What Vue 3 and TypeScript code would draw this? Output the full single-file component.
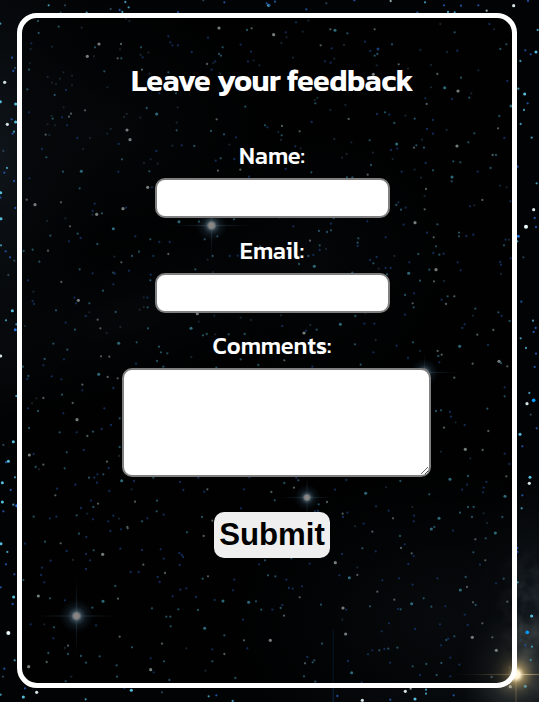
<script setup lang="ts">
interface Star { x: number; y: number; kind: string }
interface Tile { x: number; y: number; stars: Star[] }
interface Flare { x: number; y: number; core: number; glow: number; rayX: number; rayY: number }

// Star positions per sky tile, in thirds of a pixel: "x,y,kind".
// w = pale, c = cyan, b = blue, d = faint; capitals are the larger stars.
function tile(x: number, y: number, data: string): Tile {
  const stars = data.trim().split(/\s+/).map((entry) => {
    const [sx, sy, kind] = entry.split(',')
    return { x: Number(sx), y: Number(sy), kind }
  })
  return { x, y, stars }
}

const tiles: Tile[] = [
  tile(0, 0, `146,16,c 195,16,d 376,6,c 386,22,c 332,27,d 367,36,c 260,38,c 182,38,d 359,30,b 534,37,b 610,1,d 673,7,b 800,10,b 806,16,C
    1,71,c 114,63,c 176,80,c 116,99,c 245,83,d 378,56,d 388,63,d 657,84,W 741,90,c 755,85,w 624,113,b 505,109,b 511,127,b 517,136,b 534,136,b
    722,134,b 297,132,W 262,169,W 285,142,c 282,169,d 363,132,w 360,148,d 353,175,w 364,175,c 423,142,c 422,165,d 445,158,d 428,172,b 156,140,d
    94,130,b 92,147,d 36,173,b 87,209,c 90,190,d 40,213,b 45,204,d 190,217,d 216,227,d 313,214,c 575,156,b 668,142,c 657,162,c 663,167,c 646,184,b
    621,192,w 640,189,d 753,155,b 744,184,b 761,181,d 778,196,d 426,209,w 505,217,c 635,209,b 660,221,d 448,221,d 14,247,W 82,268,c 143,231,d
    156,248,d 180,236,d 168,253,d 216,256,d 198,270,b 164,285,c 322,262,d 1,305,C 47,312,C 478,280,b 528,280,c 736,320,c 533,322,d 440,324,c
    255,331,w 191,322,d 87,337,b 213,341,w 207,350,w 155,348,d 158,356,c 186,352,b 35,358,b 47,366,C 22,373,W 380,342,d 470,342,C 372,351,d
    421,353,d 650,358,w 530,368,d 530,391,c 633,393,c 795,376,c 802,382,b 143,373,d 165,376,d 201,376,b 42,395,c 38,401,b 137,404,w 148,405,d
    232,414,b 270,414,d 322,401,d 332,387,d 381,390,W 390,419,W 356,432,b 672,403,c 708,412,b 126,447,b 139,472,c 249,447,d 10,453,d 545,436,b
    583,438,c 517,437,d 688,434,d 469,453,b 366,478,c 452,478,d 473,491,d 662,475,c 647,482,b 21,504,c 13,518,b 189,515,c 244,514,C 355,515,b
    448,514,c 654,512,w 721,509,w 432,489,d 703,477,b`),
  tile(269, 0, `1,15,b 18,5,b 112,28,b 256,1,b 365,3,w 468,7,c 525,16,b 576,17,b 628,16,b 734,17,W 777,3,b 172,10,d 653,32,w 557,37,c 537,36,c
    445,38,b 806,90,c 118,62,d 81,67,b 14,104,W 50,97,b 53,112,d 37,129,d 184,88,w 198,91,C 235,100,c 317,88,w 101,95,d 155,136,w 188,145,b
    225,135,d 288,125,b 327,147,B 304,153,b 317,167,c 325,162,c 369,133,c 454,150,d 534,156,d 565,152,b 557,97,c 514,72,d 661,72,b 675,88,d
    712,133,c 694,147,c 769,151,b 801,156,C 785,163,b 754,183,c 72,173,d 168,184,b 185,188,b 196,176,d 389,193,w 417,206,d 486,195,d 323,196,d
    313,223,W 505,222,w 576,233,c 628,211,d 715,243,b 527,263,C 567,273,W 549,297,b 469,295,b 473,312,w 601,293,c 607,280,d 486,262,d
    748,266,c 767,282,C 776,310,b 765,330,c 755,372,c 788,413,c 726,318,C 687,385,w 691,348,c 139,310,c 145,294,d 137,300,d 184,330,d 229,315,d
    239,357,w 324,342,b 348,337,c 361,344,b 376,369,c 409,347,d 437,356,c 492,360,b 533,390,d 474,387,b 39,378,w 28,396,d 38,406,c 92,394,w
    128,366,b 196,417,d 247,427,d 302,421,c 383,432,C 366,450,b 385,446,b 435,443,w 442,436,c 465,443,c 459,419,d 492,401,b 598,427,c 616,400,c
    564,438,W 553,484,c 574,487,c 671,465,w 681,465,c 706,414,b 746,500,b 665,504,c 79,439,b 219,473,d 233,462,d 312,458,d 371,477,d
    306,495,c 296,524,w 127,517,c 50,507,b 470,489,b 492,511,c 626,515,b 398,515,b 437,509,d 36,420,d 95,445,d`),
  tile(0, 176, `2,50,C 42,15,b 88,7,b 1,65,b 46,96,b 3,128,C 80,71,w 105,86,W 183,79,w 239,37,c 443,34,W 456,34,b 284,83,b 278,105,b 277,116,d
    290,115,W 306,112,c 369,98,W 378,95,b 141,135,d 196,127,d 210,151,w 233,173,c 340,158,C 151,179,c 207,196,b 242,186,b 292,204,c 3,208,c
    17,226,b 30,244,b 43,254,d 71,225,c 98,221,c 144,224,w 118,257,c 239,280,c 278,292,b 340,290,c 345,293,b 364,259,w 387,284,b 406,181,b
    451,190,c 478,198,b 509,198,b 396,240,c 417,227,c 460,240,b 505,234,w 343,242,d 537,137,C 597,137,c 702,130,c 652,181,c 614,190,c 638,240,c
    623,251,d 689,240,b 713,239,b 586,280,c 639,289,d 452,296,b 451,313,c 84,313,b 184,318,w 309,344,c 340,325,b 25,297,d 100,347,d 98,375,b
    102,384,b 37,404,C 18,433,c 49,445,c 46,461,B 168,403,c 223,365,b 235,373,W 228,382,b 268,382,c 268,409,d 257,420,b 293,431,w 347,408,c
    197,440,b 225,461,c 301,457,w 320,471,d 361,453,d 75,450,d 356,502,C 160,503,c 202,521,c 410,499,c 444,457,c 477,512,c 431,364,d 442,365,b
    431,393,d 443,394,c 419,401,d 592,413,W 643,419,d 596,437,d 573,457,C 609,478,c 620,474,c 646,475,d 686,475,c 734,474,c 722,425,d 747,2,b
    781,211,c 753,432,d`),
  tile(269, 176, `234,4,c 250,4,c 456,5,d 549,3,C 548,16,c 471,39,w 467,60,d 467,100,w 388,79,b 382,87,c 396,101,c 410,95,b 640,72,w 603,91,b
    616,88,d 693,29,d 713,34,d 724,76,b 803,22,c 794,101,W 797,126,b 801,153,b 771,152,H 748,181,B 745,196,c 710,191,b 705,208,c 763,244,d
    438,140,W 404,146,b 505,145,c 494,184,w 474,170,b 501,211,c 570,170,c 570,181,c 613,176,b 592,180,b 720,191,d 725,247,b 693,258,b 696,266,b
    448,234,c 493,231,b 511,236,c 524,233,b 421,259,b 501,281,W 481,281,c 419,292,C 453,314,c 495,316,w 566,259,b 575,283,b 696,294,d
    73,151,b 32,125,d 194,126,c 186,143,b 186,163,c 174,168,c 150,165,c 123,194,w 152,208,c 152,222,b 171,219,d 136,271,C 118,240,c 133,237,b
    90,264,c 268,187,c 266,200,c 266,210,b 295,136,b 350,184,b 323,243,b 303,252,b 313,262,c 329,278,d 350,276,b 365,276,b 376,240,d
    354,295,c 250,290,c 408,357,c 435,352,b 431,382,w 434,394,c 408,416,b 536,361,c 556,361,w 518,371,b 531,384,w 525,315,d 619,398,c 612,419,d
    688,409,c 698,420,b 722,435,c 673,462,w 625,476,w 587,445,b 580,456,b 757,377,b 792,434,c 800,456,b 794,468,b 755,487,c 771,516,c
    259,420,c 214,445,C 105,471,W 111,464,b 143,461,c 36,418,d 40,450,b 124,447,d 286,443,b 316,443,b 289,412,d 258,505,c 383,509,b 432,499,c
    572,511,C 506,525,w 657,507,b 453,525,d 320,492,d`),
  tile(0, 352, `2,12,W 134,21,c 130,40,b 192,22,b 69,44,c 85,72,c 82,81,b 155,73,b 184,82,b 296,67,C 323,75,w 353,79,w 340,108,b 247,98,w
    247,115,b 303,13,w 328,14,w 186,128,c 130,138,w 109,139,d 96,154,d 84,169,b 114,177,c 218,153,w 190,184,b 313,169,b 231,203,W 359,199,c
    333,219,b 305,231,b 279,239,c 262,252,w 230,241,b 179,241,c 87,228,c 49,132,c 40,269,C 10,279,d 25,328,C 18,331,b 45,376,c 7,392,C 32,414,b
    7,450,C 40,458,c 50,461,B 10,478,b 88,309,W 101,306,b 130,338,w 107,345,c 117,352,d 200,301,c 251,294,b 359,285,c 357,312,d 321,329,w
    326,348,b 194,349,c 267,377,c 283,377,b 292,367,b 310,367,c 291,392,b 226,398,b 365,386,C 402,387,b 460,377,c 328,417,b 171,410,b
    166,430,w 273,446,b 280,465,c 294,455,w 405,449,w 243,468,b 262,485,d 230,490,c 279,502,b 340,491,b 325,508,b 426,508,c 470,478,c
    471,446,c 382,525,w 357,500,d 101,494,c 150,499,b 169,494,b 540,390,b 550,414,b 595,377,b 622,412,w 613,419,b 732,412,b 723,469,b
    606,495,c 637,506,w 442,499,b 491,488,b 395,412,d 722,22,c 775,39,c 649,47,c 490,44,c 502,4,c 483,1,c 471,27,c 574,15,d 408,35,b 748,376,b`),
  tile(269, 352, `46,25,w 130,44,b 417,18,b 508,12,c 518,8,w 511,31,b 611,35,w 690,28,W 696,33,c 715,43,w 801,5,b 797,45,b 275,38,c
    313,1,b 556,77,w 501,177,c 543,180,b 516,175,c 546,194,b 587,219,b 560,211,d 525,227,w 655,170,c 658,237,w 707,106,b 707,133,c
    781,123,c 794,145,N 774,155,W 785,188,d 753,247,C 760,283,b 803,229,b 589,292,W 604,319,d 641,294,w 707,305,b 721,336,b 516,299,d
    543,382,C 597,372,c 594,398,b 579,413,b 652,390,b 712,373,w 783,376,C 781,394,W 642,421,b 760,430,b 758,469,c 708,433,C 644,407,b
    394,387,c 481,427,c 430,465,d 435,491,b 434,508,b 510,499,C 573,482,c 597,465,c 614,465,c 609,495,c 644,484,d 700,495,c 654,513,d
    7,420,w 46,393,c 17,445,c 88,385,c 75,407,w 82,377,b 174,450,w 149,457,c 138,478,b 147,477,b 198,413,b 232,384,b 290,424,C 351,406,d
    321,463,b 359,476,b 372,499,w 235,482,b 221,485,w 222,495,b 284,515,b 496,525,c 258,523,d`),
  tile(0, 528, `3,47,C 22,72,c 18,109,b 43,139,b 2,178,b 41,207,C 38,228,b 25,315,H 44,397,c 13,422,b 2,500,c 9,446,d 75,47,b 135,41,c 182,46,w
    200,69,b 281,67,c 308,79,W 270,97,b 219,96,d 237,17,c 259,27,b 258,78,b 152,98,b 126,119,b 123,141,b 133,163,b 70,156,c 258,123,b
    115,204,W 150,211,c 195,217,b 309,220,C 354,212,w 346,174,c 277,239,c 288,292,b 162,298,c 92,289,b 133,289,d 160,331,b 204,353,w
    195,360,d 204,378,c 243,384,c 145,375,c 140,402,w 86,416,W 258,404,c 299,385,c 350,412,c 351,446,c 214,446,d 197,460,c 359,326,w
    396,358,c 452,391,b 492,400,c 452,425,W 461,433,b 508,456,c 486,347,w 456,241,c 512,295,c 499,266,c 511,266,c 535,244,c 518,205,b
    541,185,b 559,181,b 495,135,w 473,147,b 479,162,b 416,132,b 392,132,b 430,110,w 361,62,b 363,4,b 331,9,b 383,1,w 426,66,b 482,64,b
    491,92,b 545,81,b 538,75,b 549,87,b 539,111,b 561,13,c 611,24,w 608,152,c 624,145,w 703,155,b 699,187,b 644,216,b 588,207,b 594,246,c
    669,219,C 614,301,C 673,322,c 729,275,b 746,223,C 768,220,c 784,245,c 732,337,w 742,361,b 637,364,b 637,400,c 673,378,w 616,428,d
    559,361,d 706,450,c 626,505,c 649,502,b 698,519,c 110,493,W 75,481,b 70,507,C 257,514,c 394,487,C 373,479,b 486,493,d 777,109,b 795,97,c 804,142,c`),
  tile(269, 528, `310,11,w 280,61,c 320,70,b 219,78,b 199,104,W 122,107,b 67,91,c 19,145,c 52,155,b 211,142,b 241,149,C 265,141,w 265,118,d
    340,157,b 390,151,b 418,108,b 396,60,w 393,24,c 407,49,b 428,76,w 434,84,b 487,3,C 552,8,b 619,34,w 650,31,c 679,15,C 613,73,c
    649,97,w 633,110,b 745,60,b 745,72,b 746,163,c 704,152,c 681,166,b 590,147,c 594,177,w 574,186,C 505,151,b 431,170,b 612,223,w
    620,231,c 715,221,w 788,264,C 775,313,N 789,356,c 785,396,c 756,335,d 769,352,b 670,328,w 610,328,W 640,286,w 596,291,b 587,260,b
    529,235,b 487,236,c 464,211,c 428,227,C 376,215,w 325,191,w 303,235,c 387,243,b 395,244,c 222,240,W 232,245,b 156,230,c 92,208,w
    71,182,b 60,180,b 99,175,b 40,231,b 35,240,c 45,263,w 10,245,b 4,337,W 159,347,c 220,275,d 230,318,W 360,286,b 338,310,b 438,303,b
    513,289,b 532,336,c 538,332,b 556,325,c 516,352,b 385,359,c 358,362,c 346,363,b 331,367,c 310,367,b 297,379,b 363,404,b 237,399,b
    136,397,c 131,403,c 108,406,w 115,387,b 105,445,c 139,461,c 248,434,C 278,463,b 431,415,c 472,408,c 517,405,c 544,389,b 571,410,b
    503,441,c 453,441,b 544,445,b 682,367,W 668,447,w 722,419,w 724,476,W 769,475,C 471,485,c 471,497,c 438,513,C 409,490,W 425,482,w
    280,517,W 364,515,b 205,504,b 554,502,b`),
]

const flares: Flare[] = [
  { x: 211.5, y: 225.5, core: 4.2, glow: 16, rayX: 45, rayY: 40 },
  { x: 307, y: 497.5, core: 3.3, glow: 13, rayX: 28, rayY: 24 },
  { x: 76.5, y: 616, core: 4.2, glow: 17, rayX: 44, rayY: 42 },
  { x: 424.5, y: 372.5, core: 4, glow: 14, rayX: 36, rayY: 20 },
]
</script>

<template>
  <main class="page">
    <svg class="sky" viewBox="0 0 539 702" aria-hidden="true">
      <defs>
        <radialGradient id="haze">
          <stop offset="0" stop-color="#18212a" stop-opacity=".55" />
          <stop offset="1" stop-color="#10161c" stop-opacity="0" />
        </radialGradient>
        <radialGradient id="halo">
          <stop offset="0" stop-color="#c5deeb" />
          <stop offset=".25" stop-color="#81a9c4" stop-opacity=".8" />
          <stop offset=".55" stop-color="#426983" stop-opacity=".35" />
          <stop offset="1" stop-color="#24465d" stop-opacity="0" />
        </radialGradient>
        <radialGradient id="ray">
          <stop offset="0" stop-color="#c0ddec" />
          <stop offset=".35" stop-color="#608aa3" stop-opacity=".5" />
          <stop offset="1" stop-color="#38627d" stop-opacity="0" />
        </radialGradient>
        <radialGradient id="core">
          <stop offset="0" stop-color="#fff6ee" />
          <stop offset=".5" stop-color="#f5f1ed" />
          <stop offset="1" stop-color="#bbd4df" stop-opacity="0" />
        </radialGradient>
        <radialGradient id="sun">
          <stop offset="0" stop-color="#fffdf0" />
          <stop offset=".15" stop-color="#fff1cd" />
          <stop offset=".32" stop-color="#b39b65" stop-opacity=".7" />
          <stop offset=".65" stop-color="#595443" stop-opacity=".35" />
          <stop offset="1" stop-color="#343c3d" stop-opacity="0" />
        </radialGradient>
        <radialGradient id="mist">
          <stop offset="0" stop-color="#6d6b5b" stop-opacity=".6" />
          <stop offset=".5" stop-color="#3a4040" stop-opacity=".4" />
          <stop offset="1" stop-color="#20282c" stop-opacity="0" />
        </radialGradient>
        <filter id="cloud" x="0" y="0" width="100%" height="100%">
          <feTurbulence type="fractalNoise" baseFrequency=".045" numOctaves="4" seed="8" />
          <feColorMatrix values="0 0 0 0 .3  0 0 0 0 .32  0 0 0 0 .3  1.8 0 0 0 -.65" />
          <feComposite in2="SourceGraphic" operator="in" />
        </filter>
      </defs>
      <rect width="539" height="702" fill="#020304" />
      <ellipse cx="0" cy="160" rx="110" ry="260" fill="url(#haze)" />
      <ellipse cx="105" cy="130" rx="160" ry="130" fill="url(#haze)" opacity=".6" />
      <ellipse cx="130" cy="315" rx="230" ry="75" fill="url(#haze)" opacity=".6" transform="rotate(-18 130 315)" />
      <ellipse cx="320" cy="260" rx="130" ry="130" fill="url(#haze)" opacity=".5" />
      <ellipse cx="445" cy="620" rx="210" ry="150" fill="url(#haze)" />
      <ellipse cx="538" cy="610" rx="85" ry="140" fill="url(#haze)" />
      <ellipse cx="515" cy="672" rx="56" ry="66" fill="url(#mist)" />
      <ellipse cx="524" cy="630" rx="36" ry="95" fill="url(#mist)" filter="url(#cloud)" opacity=".6" />
      <rect x="332.5" y="630" width="1.5" height="72" fill="#103766" opacity=".45" />
      <g v-for="(t, i) in tiles" :key="i" :transform="`translate(${t.x} ${t.y}) scale(.33333)`">
        <circle v-for="(s, j) in t.stars" :key="j" :cx="s.x" :cy="s.y" r="3.4" :class="['star', `star-${s.kind}`]" />
      </g>
      <g v-for="(f, i) in flares" :key="`f${i}`">
        <ellipse :cx="f.x" :cy="f.y" :rx="f.rayX" ry="1.3" fill="url(#ray)" opacity=".55" />
        <ellipse :cx="f.x" :cy="f.y" rx="1.3" :ry="f.rayY" fill="url(#ray)" opacity=".55" />
        <circle :cx="f.x" :cy="f.y" :r="f.glow" fill="url(#halo)" />
        <circle :cx="f.x" :cy="f.y" :r="f.core + 1" fill="url(#core)" />
      </g>
      <ellipse cx="516" cy="674.5" rx="62" ry="1.4" fill="url(#sun)" />
      <ellipse cx="516" cy="674.5" rx="1.4" ry="62" fill="url(#sun)" opacity=".6" />
      <circle cx="516" cy="674.5" r="27" fill="url(#sun)" />
    </svg>

    <form class="feedback" @submit.prevent>
      <h1>Leave your feedback</h1>
      <label for="name">Name:</label>
      <input id="name" type="text" />
      <label for="email">Email:</label>
      <input id="email" type="email" />
      <label for="comments">Comments:</label>
      <textarea id="comments"></textarea>
      <button type="submit">Submit</button>
    </form>
  </main>
</template>

<style>
body { margin: 0; background: #020304; }
</style>

<style scoped>
* { box-sizing: border-box; }
.page { position: relative; width: 539px; height: 702px; padding: 13px 22px 14px 17px; overflow: hidden; }
.sky { position: absolute; inset: 0; width: 539px; height: 702px; }
.star-w { fill: #91a5aa; }
.star-c { fill: #3f8fad; }
.star-b { fill: #204f9c; }
.star-d { fill: #294053; }
.star-W { fill: #d4e2e4; r: 4.8px; }
.star-C { fill: #55bddb; r: 4.6px; }
.star-B { fill: #286ed9; r: 4.5px; }
.star-N { fill: #009cff; r: 5.5px; }
.star-H { fill: #eafaff; r: 6px; }
.feedback {
  position: relative;
  display: flex;
  flex-direction: column;
  align-items: center;
  width: 500px;
  height: 675px;
  padding: 42px 0 0 10px;
  border: 5px solid #fff;
  border-radius: 20px;
  background: rgb(0 0 0 / 45%);
  color: #fff;
  font-family: Kanit, "Noto Sans", sans-serif;
}
h1 { margin: 0 0 35px; height: 42px; font-size: 30.5px; line-height: 40px; font-weight: 600; letter-spacing: -.55px; word-spacing: .8px; white-space: nowrap; }
label { height: 36px; margin-bottom: 5px; font-size: 23.6px; line-height: 38px; font-weight: 450; white-space: nowrap; }
input { width: 235px; height: 40px; margin: 0 0 14px; padding: 0; border: 2px solid #808080; border-radius: 10px; background: #fff; }
textarea { width: 309px; height: 109px; margin: 0 0 35px 9px; padding: 2px; border: 2px solid #808080; border-radius: 10px; background: #fff; resize: both; }
button { width: 116px; height: 46px; padding: 0; border: 0; border-radius: 10px; background: #efefef; color: #000; font: bold 31.2px/44px "Liberation Sans", sans-serif; }
</style>
